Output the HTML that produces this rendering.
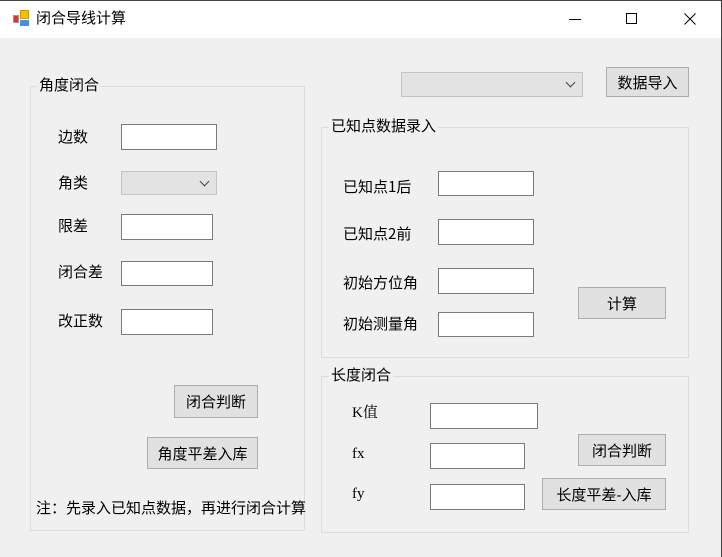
<!DOCTYPE html>
<html><head><meta charset="utf-8"><style>
*{box-sizing:border-box;margin:0;padding:0}
body{width:722px;height:557px;background:#f0f0f0;position:relative;overflow:hidden;font-family:"Noto Sans CJK SC","Liberation Sans",sans-serif;font-size:15px;color:#000}
.a{position:absolute}
.t{position:absolute;line-height:16px;white-space:nowrap}
.tb{position:absolute;background:#fff;border:1px solid #7a7a7a}
.cb{position:absolute;background:#e3e3e3;border:1px solid #c4c4c4}
.cb::after{content:"";position:absolute;right:8px;top:6px;width:6px;height:6px;border-right:1.3px solid #444;border-bottom:1.3px solid #444;transform:rotate(45deg)}
.bt{position:absolute;background:#e1e1e1;border:1px solid #adadad;display:flex;align-items:center;justify-content:center;white-space:nowrap}
.gb{position:absolute;border:1px solid #dcdcdc}
.gl{position:absolute;background:#f0f0f0;padding:0 2px;line-height:16px;white-space:nowrap}
</style></head><body>
<div class="a" style="left:0;top:0;width:722px;height:38px;background:#fff"></div>
<div class="a" style="left:721px;top:0;width:1px;height:557px;background:#444"></div>
<div class="a" style="left:0;top:0;width:722px;height:1px;background:#444"></div>
<div class="a" style="left:13px;top:15px;width:6px;height:8px;background:#d33;border:1px solid #999"></div>
<div class="a" style="left:20px;top:10px;width:9px;height:9px;background:#f5c000;border:1px solid #c90"></div>
<div class="a" style="left:20px;top:20px;width:9px;height:6px;background:#4a8ee0"></div>
<div class="t" style="left:36px;top:10px">闭合导线计算</div>
<div class="a" style="left:569px;top:19px;width:12px;height:1px;background:#000"></div>
<div class="a" style="left:626px;top:13px;width:11px;height:11px;border:1px solid #000"></div>
<svg class="a" style="left:684px;top:13px" width="12" height="12"><path d="M0.5 0.5L11.5 11.5M11.5 0.5L0.5 11.5" stroke="#000" stroke-width="1"/></svg>

<div class="gb" style="left:30px;top:86px;width:275px;height:445px"></div>
<div class="gl" style="left:37px;top:77px">角度闭合</div>
<div class="t" style="left:58px;top:129px">边数</div>
<div class="tb" style="left:121px;top:124px;width:96px;height:26px"></div>
<div class="t" style="left:58px;top:175px">角类</div>
<div class="cb" style="left:121px;top:171px;width:96px;height:24px"></div>
<div class="t" style="left:58px;top:218px">限差</div>
<div class="tb" style="left:121px;top:214px;width:92px;height:26px"></div>
<div class="t" style="left:58px;top:264px">闭合差</div>
<div class="tb" style="left:121px;top:261px;width:92px;height:25px"></div>
<div class="t" style="left:58px;top:313px">改正数</div>
<div class="tb" style="left:121px;top:309px;width:92px;height:26px"></div>
<div class="bt" style="left:174px;top:385px;width:84px;height:33px">闭合判断</div>
<div class="bt" style="left:147px;top:437px;width:111px;height:32px">角度平差入库</div>
<div class="t" style="left:36px;top:500px">注：先录入已知点数据，再进行闭合计算</div>

<div class="cb" style="left:401px;top:72px;width:182px;height:25px"></div>
<div class="bt" style="left:606px;top:67px;width:83px;height:30px">数据导入</div>

<div class="gb" style="left:321px;top:127px;width:368px;height:231px"></div>
<div class="gl" style="left:329px;top:118px">已知点数据录入</div>
<div class="t" style="left:343px;top:179px">已知点1后</div>
<div class="tb" style="left:438px;top:171px;width:96px;height:25px"></div>
<div class="t" style="left:343px;top:226px">已知点2前</div>
<div class="tb" style="left:438px;top:219px;width:96px;height:26px"></div>
<div class="t" style="left:343px;top:275px">初始方位角</div>
<div class="tb" style="left:438px;top:268px;width:96px;height:26px"></div>
<div class="t" style="left:343px;top:316px">初始测量角</div>
<div class="tb" style="left:438px;top:312px;width:96px;height:25px"></div>
<div class="bt" style="left:578px;top:287px;width:88px;height:32px">计算</div>

<div class="gb" style="left:321px;top:376px;width:368px;height:157px"></div>
<div class="gl" style="left:329px;top:367px">长度闭合</div>
<div class="t" style="left:352px;top:405px;font-family:'Liberation Serif','Noto Serif CJK SC',serif">K值</div>
<div class="tb" style="left:430px;top:403px;width:108px;height:26px"></div>
<div class="t" style="left:352px;top:446px;font-family:'Liberation Serif',serif">fx</div>
<div class="tb" style="left:430px;top:443px;width:95px;height:26px"></div>
<div class="t" style="left:352px;top:486px;font-family:'Liberation Serif',serif">fy</div>
<div class="tb" style="left:430px;top:484px;width:95px;height:26px"></div>
<div class="bt" style="left:578px;top:434px;width:88px;height:32px">闭合判断</div>
<div class="bt" style="left:542px;top:478px;width:124px;height:32px">长度平差-入库</div>
</body></html>
